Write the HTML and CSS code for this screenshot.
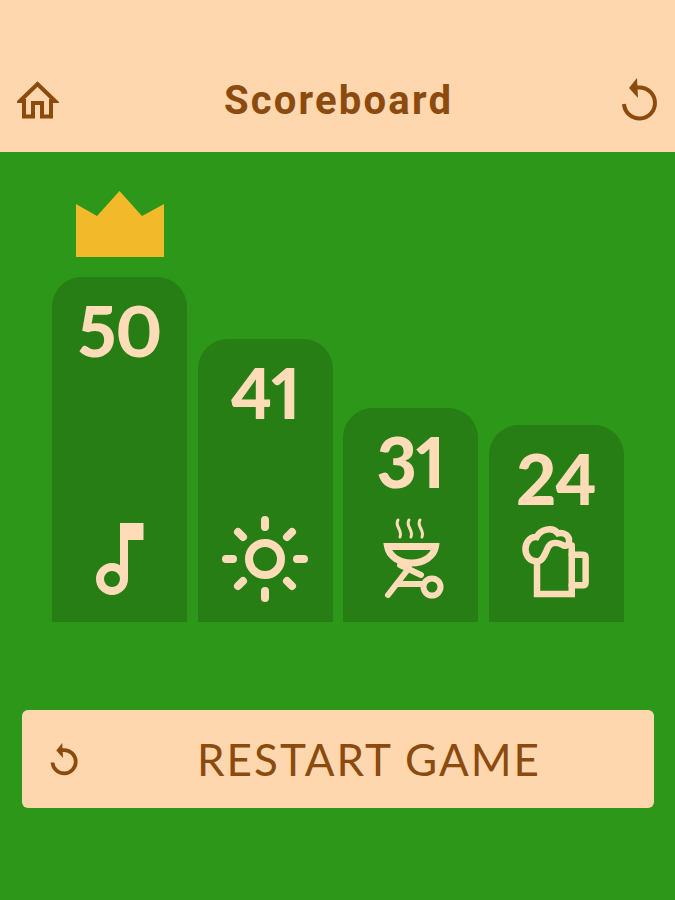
FILE: index.html
```html
<!DOCTYPE html>
<html lang="en">
<head>
  <meta charset="UTF-8">
  <meta name="viewport" content="width=device-width, initial-scale=1.0">
  <title>Scoreboard</title>
  <link rel="stylesheet" href="styles.css">
</head>
<body>
  <header class="top-bar">
    <svg class="icon-home" viewBox="0 0 42 38">
      <path d="M3 20 L20.500 3 L38 20 H34 V35.500 H25 V22 H16 V35.500 H7 V20 Z"/>
    </svg>
    <h1 class="title">Scoreboard</h1>
    <svg class="icon-redo" viewBox="0 0 40 44">
      <path class="arrow" d="M19 0 L11 10 L20 20 Z"/>
      <path d="M18 9.500 H21.500 A15.500 15.500 0 1 1 6 26"/>
    </svg>
  </header>

  <main class="content">
    <section class="podium">
      <div class="column">
        <svg class="crown" viewBox="0 0 88 66">
          <path d="M0 13 L21 25 L43.500 0 L66 25 L88 13 V66 H0 Z"/>
        </svg>
        <div class="bar" style="height: 345px">
          <span class="score">50</span>
          <svg class="bar-icon" viewBox="60 505 120 108">
            <circle cx="112" cy="579" r="12"/>
            <path class="stem" d="M124 579 V523"/>
            <path class="fill" d="M120 523 H143.500 V540 H120 Z"/>
          </svg>
        </div>
      </div>
      <div class="bar" style="height: 283px">
        <span class="score">41</span>
        <svg class="bar-icon" viewBox="205 505 120 108">
          <circle class="ring" cx="265" cy="559" r="16"/>
          <path class="ray" d="M265 520 V527 M265 591 V598 M226 559 H233 M297 559 H304 M238 532 L243 537 M287 581 L292 586 M292 532 L287 537 M243 581 L238 586"/>
        </svg>
      </div>
      <div class="bar" style="height: 214px">
        <span class="score">31</span>
        <svg class="bar-icon" viewBox="350 505 120 108">
          <path class="steam" d="M397 520 C393 526 402 530 399 537 M408 520 C404 526 413 530 410 537 M419 520 C415 526 424 530 421 537"/>
          <path class="bowl" d="M386.500 546.500 H434.500 C433 556 423 563 410.500 563 C398 563 388 556 386.500 546.500 Z"/>
          <path class="leg" d="M399 565 L420 575 M408 568 L387 595 M396 584 H422"/>
          <circle class="wheel" cx="431" cy="587" r="8.500"/>
        </svg>
      </div>
      <div class="bar" style="height: 197px">
        <span class="score">24</span>
        <svg class="bar-icon" viewBox="497 505 120 108">
          <path d="M536.500 557 V592.500 H574 V540"/>
          <path d="M574 550 H586 Q589 550 589 553 V580 Q589 583 586 583 H574"/>
          <path d="M538 557 C529 558 524 551 524 544 C524 536 530 530 536 531 C540 523 553 519 559 527 C566 525 572 530 571 536 C571 540 568 541 565 540 C558 536 552 537 549 541 C546 546 544 556 538 557 Z"/>
        </svg>
      </div>
    </section>

    <button class="restart" type="button">
      <svg class="icon-restart" viewBox="0 0 40 44">
        <path class="arrow" d="M19 0 L11 10 L20 20 Z"/>
        <path d="M18 9.500 H21.500 A15.500 15.500 0 1 1 6 26"/>
      </svg>
      <span class="restart-label">RESTART GAME</span>
    </button>
  </main>
</body>
</html>
```

FILE: styles.css
```css
html, body {
  margin: 0;
  height: 100%;
}

body {
  background-color: #2c9718;
  font-family: "Lato", "Liberation Sans", sans-serif;
}

.top-bar {
  display: flex;
  align-items: center;
  justify-content: space-between;
  box-sizing: border-box;
  height: 152px;
  padding: 48px 17px 0 17px;
  background-color: #ffd7ae;
}

.title {
  margin: 0;
  font-family: "Roboto", "Liberation Sans", sans-serif;
  font-size: 40px;
  font-weight: 700;
  letter-spacing: 2.2px;
  color: #8b4a0e;
}

.top-bar svg path,
.restart svg path {
  fill: none;
  stroke: #8b4a0e;
  stroke-width: 4;
}

.top-bar svg .arrow,
.restart svg .arrow {
  fill: #8b4a0e;
  stroke: none;
}

.icon-home {
  width: 42px;
  height: 38px;
}

.icon-redo {
  width: 40px;
  height: 44px;
}

.content {
  padding: 39px 21px 0 22px;
}

.podium {
  display: grid;
  grid-template-columns: repeat(4, 135px);
  column-gap: 10.5px;
  align-items: end;
  padding: 0 30px;
}

.column {
  display: flex;
  flex-direction: column;
  align-items: center;
}

.crown {
  width: 88px;
  height: 66px;
  margin-bottom: 20px;
}

.crown path {
  fill: #f2b92b;
}

.bar {
  display: flex;
  flex-direction: column;
  align-items: center;
  justify-content: space-between;
  box-sizing: border-box;
  width: 100%;
  padding: 18px 0 9px 0;
  border-radius: 30px 30px 0 0;
  background-color: #267e14;
}

.score {
  font-size: 70px;
  font-weight: 900;
  line-height: 70px;
  letter-spacing: -1px;
  font-variant-numeric: proportional-nums;
  color: #ffdcb8;
}

.bar-icon {
  width: 120px;
  height: 108px;
}

.bar-icon circle,
.bar-icon path {
  fill: none;
  stroke: #ffdcb8;
  stroke-width: 7;
  stroke-linecap: round;
}

.bar-icon .fill {
  fill: #ffdcb8;
  stroke: none;
}

.bar-icon circle,
.bar-icon .stem {
  stroke-width: 8;
  stroke-linecap: butt;
}

.bar-icon .ray {
  stroke-width: 8;
}

.bar-icon .steam {
  stroke-width: 3;
}

.bar-icon .leg,
.bar-icon .wheel {
  stroke-width: 6;
}

.restart {
  display: flex;
  align-items: center;
  box-sizing: border-box;
  width: 632px;
  height: 98px;
  margin-top: 88px;
  padding: 0 0 0 26px;
  border: none;
  border-radius: 6px;
  background-color: #ffd7ae;
  font-family: inherit;
}

.restart svg path {
  stroke-width: 5;
}

.icon-restart {
  width: 30px;
  height: 33px;
}

.restart-label {
  flex: 1;
  padding-left: 6px;
  text-align: center;
  font-size: 44px;
  letter-spacing: 2px;
  color: #8b4a0e;
}
```
